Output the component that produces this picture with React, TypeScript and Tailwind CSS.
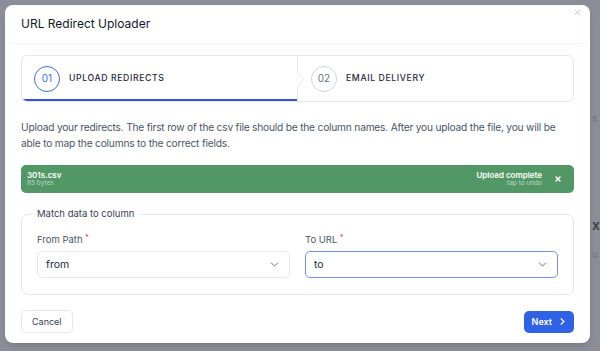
import { ChevronDown, ChevronRight, X } from "lucide-react";

function Step({
  num,
  label,
  active,
  className,
}: {
  num: string;
  label: string;
  active?: boolean;
  className?: string;
}) {
  return (
    <div className={"relative flex items-center gap-[9px] " + (className ?? "")}>
      <div
        className={
          active
            ? "flex h-[26px] w-[26px] items-center justify-center rounded-full border border-[#3b6fe8] text-[10px] text-[#3b6fe8]"
            : "flex h-[26px] w-[26px] items-center justify-center rounded-full border border-gray-300 text-[10px] text-gray-500"
        }
      >
        {num}
      </div>
      <span className="text-[8.7px] font-medium uppercase tracking-[0.07em] text-gray-800">
        {label}
      </span>
      {active ? (
        <div className="absolute bottom-0 left-0 right-0 h-[2px] bg-[#2f55d4]" />
      ) : null}
    </div>
  );
}

function Select({
  label,
  value,
  focused,
}: {
  label: string;
  value: string;
  focused?: boolean;
}) {
  return (
    <div className="flex flex-1 flex-col">
      <label className="h-[12px] text-[9.5px] leading-[12px] text-gray-600">
        {label} <span className="relative -top-[3px] text-[7px] text-red-500">*</span>
      </label>
      <div
        className={
          focused
            ? "mt-[5px] flex h-[27px] items-center justify-between rounded-[5px] border border-[#6d8ff0] bg-white pl-[8px] pr-[8px] text-[10.5px] text-gray-800"
            : "mt-[5px] flex h-[27px] items-center justify-between rounded-[5px] border border-gray-200 bg-white pl-[8px] pr-[8px] text-[10.5px] text-gray-800"
        }
      >
        <span>{value}</span>
        <ChevronDown size={13} strokeWidth={1.5} className="text-gray-600" />
      </div>
    </div>
  );
}

export default function App() {
  return (
    <div
      className="flex h-[351px] w-[600px] overflow-hidden bg-[#8b8e98] pl-[5px] pt-[5px]"
      style={{ fontFamily: "Inter, 'Noto Sans', sans-serif" }}
    >
      <div className="relative flex h-[338px] w-[585px] shrink-0 flex-col rounded-[8px] bg-white shadow-md">
        <button className="absolute right-[8px] top-[3px] text-gray-400">
          <X size={9} strokeWidth={1.5} />
        </button>
        <div className="mx-[5px] flex h-[39px] items-center border-b border-gray-100 px-[11px]">
          <h2 className="text-[12px] text-gray-900">URL Redirect Uploader</h2>
        </div>

        <div className="flex flex-1 flex-col px-[16px] pt-[11px]">
          <div className="flex h-[47px] overflow-hidden rounded-[6px] border border-gray-200">
            <Step num="01" label="Upload Redirects" active className="w-[275px] shrink-0 pl-[12px]" />
            <svg width="8" height="47" viewBox="0 0 8 47" className="shrink-0">
              <path
                d="M0.5 0 V17 L6.5 23.5 L0.5 30 V47"
                fill="none"
                stroke="#e5e7eb"
                strokeWidth="1"
              />
            </svg>
            <Step num="02" label="Email Delivery" className="flex-1 pl-[6px]" />
          </div>

          <p className="mt-[17px] text-[10.2px] leading-[16px] tracking-[-0.02em] text-gray-600">
            Upload your redirects. The first row of the csv file should be the column names. After
            you upload the file, you will be able to map the columns to the correct fields.
          </p>

          <div className="mt-[14px] flex h-[28px] items-center justify-between rounded-[5px] bg-[#529866] pl-[6px] pr-[12px] text-white">
            <div className="flex flex-col leading-none">
              <span className="text-[8px] font-semibold">301s.csv</span>
              <span className="mt-[1px] text-[6.5px] text-white/55">85 bytes</span>
            </div>
            <div className="flex items-center gap-[12px]">
              <div className="flex flex-col items-end leading-none">
                <span className="text-[8px] font-semibold">Upload complete</span>
                <span className="mt-[1px] text-[6.5px] text-white/55">tap to undo</span>
              </div>
              <X size={8} strokeWidth={4} />
            </div>
          </div>

          <fieldset className="mt-[15px] rounded-[7px] border border-gray-200 px-[15px] pb-[16px] pt-[14px]">
            <legend className="-ml-[5px] px-[5px] text-[9.5px] leading-[12px] text-gray-700">
              Match data to column
            </legend>
            <div className="flex gap-[15px]">
              <Select label="From Path" value="from" />
              <Select label="To URL" value="to" focused />
            </div>
          </fieldset>

          <div className="mt-[15px] flex items-center justify-between">
            <button className="h-[23px] rounded-[5px] border border-gray-200 px-[10px] text-[9px] text-gray-700">
              Cancel
            </button>
            <button className="flex h-[22px] items-center gap-[5px] rounded-[5px] bg-[#2f62e4] pl-[8px] pr-[6px] text-[9px] font-semibold text-white">
              Next
              <ChevronRight size={11} strokeWidth={2.5} />
            </button>
          </div>
        </div>
      </div>
      <div className="flex w-[10px] shrink-0 flex-col overflow-hidden pl-[2px] text-[10px] whitespace-nowrap">
        <span className="mt-[106px] text-[#6f7279]">s y</span>
        <span className="mt-[88px] text-[14px] font-semibold text-[#3f4248]">x</span>
        <span className="mt-[12px] text-[#6f7279]">u</span>
      </div>
    </div>
  );
}
